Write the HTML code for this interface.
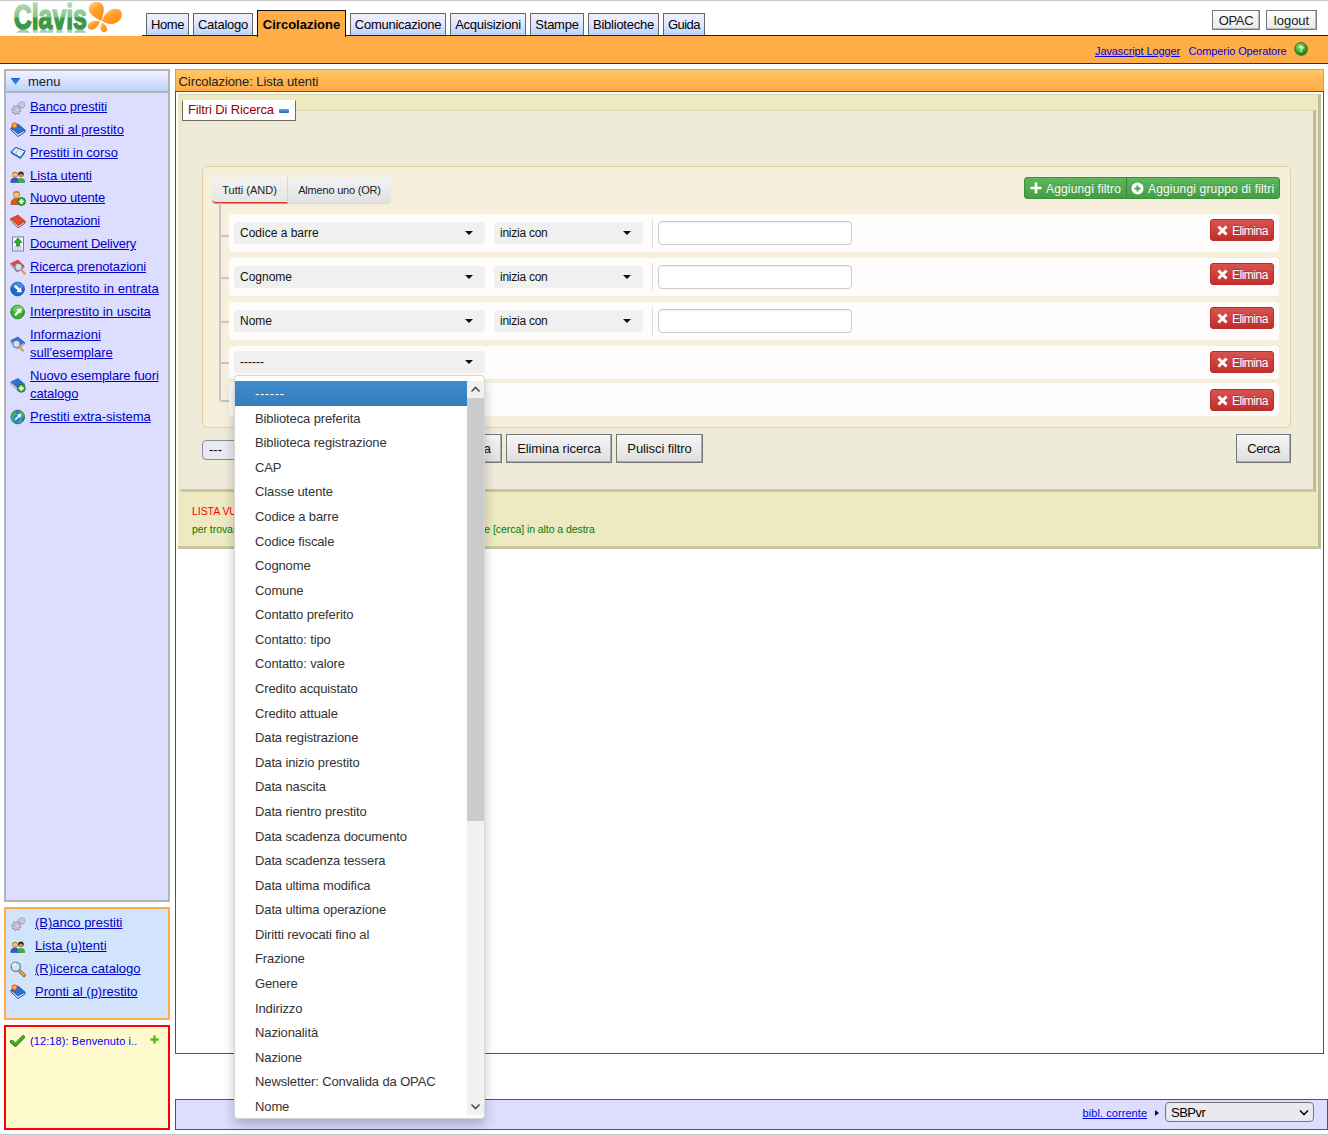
<!DOCTYPE html>
<html>
<head>
<meta charset="utf-8">
<title>Clavis</title>
<style>
*{box-sizing:border-box;margin:0;padding:0}
html,body{width:1328px;height:1135px;overflow:hidden;background:#fff}
body{position:relative;font-family:"Liberation Sans",sans-serif;font-size:13px;color:#000}
.abs{position:absolute}
a{color:#0000cc;text-decoration:underline}
/* top */
#topline{left:0;top:0;width:1328px;height:1px;background:#c8c8c8}
#tabline{left:142px;top:35px;width:1186px;height:1px;background:#222;z-index:1}
#obar{left:0;top:36px;width:1328px;height:28px;background:#ffad46;border-bottom:1px solid #333}
.tab{position:absolute;top:13px;height:22px;border:1px solid #666;border-bottom:none;background:linear-gradient(#eef0ff 0%,#e4e8ff 45%,#b8d2fb 100%);font-size:13px;line-height:21px;text-align:center;white-space:nowrap;letter-spacing:-0.25px}
.tab.act{letter-spacing:0;top:10px;height:27px;background:#ffad46;border-color:#111;font-weight:bold;line-height:27px;z-index:2}
.tbtn{position:absolute;top:10px;height:20px;border:1px solid #777;background:linear-gradient(#fdfdfd,#e9e9e9);box-shadow:inset -1px -1px 0 #bbb;font-size:13px;line-height:19px;text-align:center;color:#222}
/* left */
.lp{position:absolute;left:4px;width:166px}
#menu{top:69px;height:833px;border:2px solid #b4b4b4;background:#ddddff}
#menuh{left:0;top:0;width:162px;height:21px;background:linear-gradient(#eef1ff,#dfe6ff 40%,#b9d3fc);border-bottom:2px solid #b4b4b4;height:22px}
.mi{position:absolute;left:24px;margin-top:1px;font-size:13px;line-height:18px;white-space:nowrap}
.ic{position:absolute;left:4px;width:16px;height:16px;margin-top:1px}
#quick{top:907px;height:113px;border:2px solid #ffad46;background:#d2e4fb}
#msg{top:1025px;height:105px;border:2px solid #ff0000;background:#fffacd}
/* main */
#title{left:175px;top:69px;width:1149px;height:23px;border:1px solid #ff9900;background:linear-gradient(#ffc868,#ffb450 60%,#ffab42);font-size:13px;line-height:21px;padding-left:2.5px;padding-top:1px;letter-spacing:-0.07px;color:#222}
#content{left:175px;top:91px;width:1149px;height:963px;border:1px solid #555;background:#fff}
#panel{left:178px;top:94px;width:1143px;height:455px;background:#eee9c1;border-right:3px solid #c1bd99;border-bottom:3px solid #c9c5a0;border-top:1px solid #d9d5ae}
#fs{left:180px;top:110px;width:1136px;height:382px;background:#eeebd8;border-right:3px solid #c1bd99;border-bottom:3px solid #c9c5a2;border-top:1px solid #d8d4b0;border-left:1px solid #ebe7d0}
#legend{left:182px;top:100px;width:114px;height:21px;background:#fff;border:1px solid #6c6c58;border-top-color:#fff;font-size:13px;line-height:18px;color:#990000;padding-left:5px;letter-spacing:-0.13px}
#grp{left:202px;top:166px;width:1089px;height:262px;border:1px solid #e2d2a2;border-radius:5px;background:#f5efdc}
.row{position:absolute;left:229px;width:1050px;background:#fefdfc;border-radius:4px}
.sel{position:absolute;height:22px;background:#f0f0f0;border-radius:3px;font-size:12px;line-height:23px;padding-left:6px;color:#111}
.sel:after{content:"";position:absolute;right:12px;top:9px;border:4px solid transparent;border-top:4.5px solid #111;border-bottom:none}
.inp{position:absolute;left:658px;width:194px;height:24px;border:1px solid #ccc;border-radius:4px;background:#fff;box-shadow:inset 0 1px 1px rgba(0,0,0,.075)}
.vsep{position:absolute;left:652px;width:1px;height:28px;background:#ddd}
.del{position:absolute;left:1210px;width:64px;height:22px;border:1px solid #b92c28;border-radius:3px;background:linear-gradient(#d9534f,#c12e2a);color:#fff;font-size:12px;line-height:22px;text-shadow:0 -1px 0 rgba(0,0,0,.2);padding-left:21px;letter-spacing:-0.5px}
.tick{position:absolute;left:221px;width:8px;height:2px;background:#c4c4c4}
.btn{position:absolute;top:434px;height:29px;border:1px solid #777;background:linear-gradient(#f6f6f6,#dedede);box-shadow:inset -1px -1px 0 #aaa;font-size:13px;line-height:27px;text-align:center;letter-spacing:-0.1px;color:#111}
/* dropdown */
#dd{left:234px;top:375px;width:251px;height:744px;background:#fff;border:1px solid #d6d6d6;border-radius:4px;box-shadow:0 6px 12px rgba(0,0,0,.23);z-index:10;overflow:hidden}
#dd .it{position:absolute;left:0;width:232px;height:24.586px;line-height:26px;padding-left:20px;font-size:13px;color:#333;white-space:nowrap;letter-spacing:-0.12px}
#dd .it.on{background:linear-gradient(#428bca,#357ebd);color:#fff;letter-spacing:0.6px}
#sb{left:232px;top:5px;width:17px;height:734px;background:#f1f1f1}
#sbt{left:232px;top:22px;width:17px;height:423px;background:#cbcbcb}
#footer{left:175px;top:1099px;width:1153px;height:31px;border:1px solid #555;background:#ddddff}
</style>
</head>
<body>
<div class="abs" id="topline"></div>
<div class="abs" style="left:0;top:1134px;width:1328px;height:1px;background:#c4c4c4"></div>
<div class="abs" id="tabline"></div>
<div class="abs" id="obar"></div>

<!-- logo -->
<svg class="abs" style="left:0;top:0" width="130" height="35" viewBox="0 0 130 35">
<defs><linearGradient id="lg" gradientUnits="userSpaceOnUse" x1="0" y1="3.5" x2="0" y2="29.5"><stop offset="0" stop-color="#b4dab4"/><stop offset="0.5" stop-color="#84c48c"/><stop offset="0.56" stop-color="#3a9848"/><stop offset="1" stop-color="#3a9848"/></linearGradient>
<linearGradient id="og" x1="0.1" y1="0" x2="0.8" y2="1"><stop offset="0" stop-color="#ffd79c"/><stop offset="0.45" stop-color="#ffa02c"/><stop offset="1" stop-color="#ff8a10"/></linearGradient>
<clipPath id="rc"><rect x="0" y="29.6" width="90" height="3.2"/></clipPath></defs>
<g clip-path="url(#rc)" opacity="0.45"><text transform="translate(0 59) scale(0.69 -1)" x="20" y="29.4" font-family="Liberation Sans" font-weight="bold" font-size="36" fill="#3a9848" stroke="#3a9848" stroke-width="1.6">Clavis</text></g>
<text transform="scale(0.69 1)" x="20" y="29.4" font-family="Liberation Sans" font-weight="bold" font-size="36" fill="url(#lg)" stroke="url(#lg)" stroke-width="1.6">Clavis</text>
<g fill="url(#og)">
<path d="M101 21 C96 18 88 14 88.6 8 C89 3 94 1.4 98 2 C103 2.6 104.6 8 103.6 12 C103 16 102 19 101 21Z"/>
<path d="M102 21 C104 15 108 10 114 8.8 C119 8 122 11 121.8 15 C121.5 20 117 23.5 112 24 C108 24.3 104 22.5 102 21Z"/>
<path d="M100 21.5 C96 20 91 20.5 88.5 23.5 C86.5 26 88 29.5 91 29.8 C95 30 98.5 26 100 21.5Z"/>
<path d="M101.5 22.5 C104 23.5 107 26 107 29 C107 31.5 105 32.8 103 32.3 C100.5 31.5 99.5 27 101.5 22.5Z"/>
</g>
</svg>

<div class="tab" style="left:146px;width:43px;letter-spacing:-0.4px">Home</div>
<div class="tab" style="left:193px;width:60px">Catalogo</div>
<div class="tab act" style="left:257px;width:89px">Circolazione</div>
<div class="tab" style="left:350px;width:96px">Comunicazione</div>
<div class="tab" style="left:450px;width:76px">Acquisizioni</div>
<div class="tab" style="left:530px;width:54px">Stampe</div>
<div class="tab" style="left:588px;width:71px">Biblioteche</div>
<div class="tab" style="left:663px;width:42px;letter-spacing:-0.5px">Guida</div>
<div class="tbtn" style="left:1212px;width:48px;letter-spacing:-0.3px">OPAC</div>
<div class="tbtn" style="left:1266px;width:51px">logout</div>
<a class="abs" style="left:1095px;top:44px;font-size:11px;line-height:14px;color:#0000ee;letter-spacing:-0.1px">Javascript Logger</a>
<span class="abs" style="left:1188.5px;top:44px;font-size:11px;line-height:14px;color:#0000ee;letter-spacing:-0.12px;white-space:nowrap">Comperio Operatore</span>
<svg class="abs" style="left:1293px;top:41px" width="17" height="17" viewBox="0 0 17 17"><defs><radialGradient id="qg" cx="0.4" cy="0.3" r="0.75"><stop offset="0" stop-color="#9be07a"/><stop offset="0.6" stop-color="#3aa82a"/><stop offset="1" stop-color="#1f7a18"/></radialGradient></defs><ellipse cx="8.6" cy="8.8" rx="6.6" ry="6.4" fill="#7a5a20" opacity="0.45"/><circle cx="8" cy="7.8" r="6.2" fill="url(#qg)" stroke="#1d6a16" stroke-width="0.9"/><text x="8" y="11" font-size="8.5" font-weight="bold" text-anchor="middle" fill="#fff" font-family="Liberation Sans">?</text></svg>

<!-- left menu -->
<div class="lp" id="menu">
<div class="abs" id="menuh"><span class="abs" style="left:22px;top:2px;font-size:13px;line-height:18px;color:#222">menu</span>
<svg class="abs" style="left:4px;top:6px" width="11" height="9" viewBox="0 0 11 9"><defs><linearGradient id="ag" x1="0" y1="0" x2="0" y2="1"><stop offset="0" stop-color="#1a5fd0"/><stop offset="1" stop-color="#4a9af0"/></linearGradient></defs><path d="M0.6 1 L10.4 1 L5.5 8 Z" fill="url(#ag)"/></svg></div>
<a class="mi" style="top:26px;letter-spacing:-0.12px">Banco prestiti</a><svg class="ic" style="top:27px" viewBox="0 0 16 16"><g transform="translate(1.2 1.8) scale(0.9)"><path d="M9.50 10.20 L10.96 10.81 L10.60 12.19 L9.03 12.01 L8.42 12.82 L9.02 14.28 L7.79 15.00 L6.80 13.76 L5.80 13.90 L5.19 15.36 L3.81 15.00 L3.99 13.43 L3.18 12.82 L1.72 13.42 L1.00 12.19 L2.24 11.20 L2.10 10.20 L0.64 9.59 L1.00 8.21 L2.57 8.39 L3.18 7.58 L2.58 6.12 L3.81 5.40 L4.80 6.64 L5.80 6.50 L6.41 5.04 L7.79 5.40 L7.61 6.97 L8.42 7.58 L9.88 6.98 L10.60 8.21 L9.36 9.20Z" fill="#d0d0e0" stroke="#7c7c96" stroke-width="0.8" stroke-linejoin="round"/><circle cx="5.8" cy="10.2" r="1.5" fill="#f4f4fb" stroke="#8c8ca6" stroke-width="0.8"/><path d="M14.30 4.60 L15.47 5.06 L15.20 6.09 L13.96 5.92 L13.51 6.51 L14.01 7.66 L13.09 8.20 L12.33 7.20 L11.60 7.30 L11.14 8.47 L10.11 8.20 L10.28 6.96 L9.69 6.51 L8.54 7.01 L8.00 6.09 L9.00 5.33 L8.90 4.60 L7.73 4.14 L8.00 3.11 L9.24 3.28 L9.69 2.69 L9.19 1.54 L10.11 1.00 L10.87 2.00 L11.60 1.90 L12.06 0.73 L13.09 1.00 L12.92 2.24 L13.51 2.69 L14.66 2.19 L15.20 3.11 L14.20 3.87Z" fill="#d8d8e6" stroke="#8a8aa4" stroke-width="0.7" stroke-linejoin="round"/><circle cx="11.6" cy="4.6" r="1.1" fill="#f4f4fb" stroke="#9a9ab2" stroke-width="0.7"/></g></svg>
<a class="mi" style="top:49px">Pronti al prestito</a><svg class="ic" style="top:50px" viewBox="0 0 16 16"><path d="M1 6 L8 2 L15 8 L8 13 Z" fill="#1f5fc0"/><path d="M1 6 L8 11 L15 8 L15 10 L8 14.5 L1 8 Z" fill="#e8e8ee" stroke="#123a80" stroke-width="0.9"/><path d="M1 6 L8 2 L15 8 L8 12 Z" fill="#2a72d8" stroke="#174a9c" stroke-width="0.6"/><circle cx="4.5" cy="3.5" r="2.6" fill="#ffb020" stroke="#d04010" stroke-width="0.9"/></svg>
<a class="mi" style="top:72px;letter-spacing:-0.06px">Prestiti in corso</a><svg class="ic" style="top:73px" viewBox="0 0 16 16"><path d="M1 7 L6 2.5 L15 6 L10.5 12.5 Z" fill="#fafcff" stroke="#2a68c8" stroke-width="1.2"/><path d="M1 7 L10.5 12.5 L15 6 L15 8 L10.5 14 L1 8.5 Z" fill="#2a68c8"/><path d="M8 4 L5.5 10" stroke="#7aa2dc" stroke-width="1"/><path d="M4 6.5 L6.5 7.6 M9 6 L12 7.2 M8.5 8 L11 9" stroke="#9ab" stroke-width="0.7"/></svg>
<a class="mi" style="top:95px;letter-spacing:-0.08px">Lista utenti</a><svg class="ic" style="top:96px" viewBox="0 0 16 16"><g transform="translate(0.5 2.2) scale(0.9 0.82)"><circle cx="5" cy="5.4" r="3" fill="#f4c088" stroke="#b07030" stroke-width="0.7"/><path d="M1.8 5 A3.3 3.3 0 0 1 8.2 4.2 L5 3.4 Z" fill="#d08a20"/><path d="M0.3 15 C0.3 10.5 2.5 9.3 5 9.3 C7.5 9.3 9.2 10.5 9.2 15 Z" fill="#2a60c0" stroke="#1a408c" stroke-width="0.6"/><circle cx="11.6" cy="4.8" r="3.1" fill="#2c2418"/><circle cx="11.6" cy="6.2" r="2.2" fill="#c89058"/><path d="M7.6 15 C7.6 11 9 10 11.6 10 C14.2 10 15.8 11 15.8 15 Z" fill="#3cb040" stroke="#208028" stroke-width="0.6"/></g></svg>
<a class="mi" style="top:117px;letter-spacing:-0.19px">Nuovo utente</a><svg class="ic" style="top:118px" viewBox="0 0 16 16"><circle cx="6.5" cy="4.5" r="3.3" fill="#f2c088" stroke="#b07838" stroke-width="0.7"/><path d="M3.3 3.6 A3.4 3.4 0 0 1 9.8 3.6 L6.5 2.8 Z" fill="#c88828"/><path d="M1 14.5 C1 9.5 3.5 8.5 6.5 8.5 C9.5 8.5 12 9.5 12 14.5 Z" fill="#d85820" stroke="#a03810" stroke-width="0.6"/><circle cx="11.5" cy="11.5" r="4" fill="#38a830" stroke="#1c6c18" stroke-width="0.7"/><path d="M11.5 9 V14 M9 11.5 H14" stroke="#fff" stroke-width="1.7"/></svg>
<a class="mi" style="top:140px;letter-spacing:-0.19px">Prenotazioni</a><svg class="ic" style="top:141px" viewBox="0 0 16 16"><path d="M1 5.5 L8 2 L15 8 L8 12.5 Z" fill="#e84828" stroke="#a82810" stroke-width="0.6"/><path d="M1 5.5 L8 12.5 L15 8 L15 10 L8 14.8 L1 7.5 Z" fill="#e8e8ee" stroke="#8a2008" stroke-width="0.9"/><path d="M2 7 L8 13.2 L14.5 9" stroke="#b0b0b0" stroke-width="0.6" fill="none"/></svg>
<a class="mi" style="top:163px;letter-spacing:-0.22px">Document Delivery</a><svg class="ic" style="top:164px" viewBox="0 0 16 16"><rect x="2.5" y="1" width="11" height="14" fill="#fdfdff" stroke="#6a84a8" stroke-width="1"/><rect x="4" y="10" width="8" height="4" fill="#cfd8e8"/><path d="M8 2 L12 6.5 L9.6 6.5 L9.6 10 L6.4 10 L6.4 6.5 L4 6.5 Z" fill="#30b030" stroke="#187818" stroke-width="0.7"/></svg>
<a class="mi" style="top:186px;letter-spacing:-0.12px">Ricerca prenotazioni</a><svg class="ic" style="top:187px" viewBox="0 0 16 16"><path d="M1 4.5 L8 1 L14 7 L7 11 Z" fill="#e84828" stroke="#a82810" stroke-width="0.6"/><path d="M1 4.5 L7 11 L14 7 L14 8.5 L7 13 L1 6.5 Z" fill="#f0f0f0" stroke="#a82810" stroke-width="0.6"/><circle cx="8.5" cy="8" r="3.6" fill="#d8ecfc" fill-opacity="0.9" stroke="#6088b8" stroke-width="1.3"/><path d="M11.2 10.8 L14.8 14.6" stroke="#e89838" stroke-width="2.2" stroke-linecap="round"/></svg>
<a class="mi" style="top:208px;letter-spacing:0.1px">Interprestito in entrata</a><svg class="ic" style="top:209px" viewBox="0 0 16 16"><circle cx="7.6" cy="8" r="6.8" fill="#1c68d0" stroke="#0c3c90" stroke-width="0.8"/><ellipse cx="8" cy="5" rx="5.6" ry="3.6" fill="#5c9cf0" fill-opacity="0.65"/><path d="M4.2 5.6 L5.8 4 L9.6 7.8 L11 6.4 L11.6 11.6 L6.4 11 L7.8 9.6 Z" fill="#fff"/></svg>
<a class="mi" style="top:231px;letter-spacing:0.04px">Interprestito in uscita</a><svg class="ic" style="top:232px" viewBox="0 0 16 16"><circle cx="7.6" cy="8" r="6.8" fill="#38b028" stroke="#1c7018" stroke-width="0.8"/><ellipse cx="8" cy="5" rx="5.6" ry="3.6" fill="#84dc6c" fill-opacity="0.65"/><path d="M4.2 10.4 L5.8 12 L9.6 8.2 L11 9.6 L11.6 4.4 L6.4 5 L7.8 6.4 Z" fill="#fff"/></svg>
<a class="mi" style="top:254px">Informazioni<br>sull'esemplare</a><svg class="ic" style="top:264px" viewBox="0 0 16 16"><path d="M1 4.5 L8 1 L14.5 6.5 L7.5 10.5 Z" fill="#2a72d8" stroke="#174a9c" stroke-width="0.6"/><path d="M1 4.5 L7.5 10.5 L14.5 6.5 L14.5 8 L7.5 12.5 L1 6.5 Z" fill="#f0f0f0" stroke="#174a9c" stroke-width="0.6"/><circle cx="6.5" cy="8" r="3.6" fill="#d8ecfc" fill-opacity="0.92" stroke="#6088b8" stroke-width="1.3"/><path d="M9.2 10.8 L12.8 14.6" stroke="#e89838" stroke-width="2.2" stroke-linecap="round"/></svg>
<a class="mi" style="top:295px;letter-spacing:-0.1px">Nuovo esemplare fuori<br>catalogo</a><svg class="ic" style="top:305px" viewBox="0 0 16 16"><path d="M1 5 L8 1.5 L14.5 7 L7.5 11 Z" fill="#2a72d8" stroke="#174a9c" stroke-width="0.6"/><path d="M1 5 L7.5 11 L14.5 7 L14.5 8.8 L7.5 13.2 L1 7 Z" fill="#f0f0f0" stroke="#174a9c" stroke-width="0.6"/><circle cx="11.3" cy="11.3" r="4" fill="#38a830" stroke="#1c6c18" stroke-width="0.7"/><path d="M11.3 8.8 V13.8 M8.8 11.3 H13.8" stroke="#fff" stroke-width="1.7"/></svg>
<a class="mi" style="top:336px;letter-spacing:-0.03px">Prestiti extra-sistema</a><svg class="ic" style="top:337px" viewBox="0 0 16 16"><circle cx="7.8" cy="8" r="6.8" fill="#2c80d8" stroke="#184c98" stroke-width="0.8"/><path d="M3 4 C5 2 7 3 6.5 5 C6 7 4 6.5 3.5 9 C3 11 5 12 4.5 13.5 C2 12 0.8 9 1.4 6.5 Z M10 1.6 C13 2.5 15 5.5 14.8 8 C13.5 8.5 12.5 7 11 7.5 C9.5 8 10.5 5 9.5 4 Z M9 11 C10.5 10 12.5 11 12.5 12.5 C11.5 14 10 14.8 8.5 14.8 Z" fill="#48b838"/><path d="M4.6 10 L5.9 11.3 L9.3 7.9 L10.6 9.2 L11.2 4.8 L6.8 5.4 L8.1 6.7 Z" fill="#fff"/></svg>
</div>

<div class="lp" id="quick"><a class="mi" style="left:29px;top:4px">(B)anco prestiti</a><svg class="ic" style="left:4px;top:5px" viewBox="0 0 16 16"><g transform="translate(1.2 1.8) scale(0.9)"><path d="M9.50 10.20 L10.96 10.81 L10.60 12.19 L9.03 12.01 L8.42 12.82 L9.02 14.28 L7.79 15.00 L6.80 13.76 L5.80 13.90 L5.19 15.36 L3.81 15.00 L3.99 13.43 L3.18 12.82 L1.72 13.42 L1.00 12.19 L2.24 11.20 L2.10 10.20 L0.64 9.59 L1.00 8.21 L2.57 8.39 L3.18 7.58 L2.58 6.12 L3.81 5.40 L4.80 6.64 L5.80 6.50 L6.41 5.04 L7.79 5.40 L7.61 6.97 L8.42 7.58 L9.88 6.98 L10.60 8.21 L9.36 9.20Z" fill="#d0d0e0" stroke="#7c7c96" stroke-width="0.8" stroke-linejoin="round"/><circle cx="5.8" cy="10.2" r="1.5" fill="#f4f4fb" stroke="#8c8ca6" stroke-width="0.8"/><path d="M14.30 4.60 L15.47 5.06 L15.20 6.09 L13.96 5.92 L13.51 6.51 L14.01 7.66 L13.09 8.20 L12.33 7.20 L11.60 7.30 L11.14 8.47 L10.11 8.20 L10.28 6.96 L9.69 6.51 L8.54 7.01 L8.00 6.09 L9.00 5.33 L8.90 4.60 L7.73 4.14 L8.00 3.11 L9.24 3.28 L9.69 2.69 L9.19 1.54 L10.11 1.00 L10.87 2.00 L11.60 1.90 L12.06 0.73 L13.09 1.00 L12.92 2.24 L13.51 2.69 L14.66 2.19 L15.20 3.11 L14.20 3.87Z" fill="#d8d8e6" stroke="#8a8aa4" stroke-width="0.7" stroke-linejoin="round"/><circle cx="11.6" cy="4.6" r="1.1" fill="#f4f4fb" stroke="#9a9ab2" stroke-width="0.7"/></g></svg>
<a class="mi" style="left:29px;top:27px">Lista (u)tenti</a><svg class="ic" style="left:4px;top:28px" viewBox="0 0 16 16"><g transform="translate(0.5 2.2) scale(0.9 0.82)"><circle cx="5" cy="5.4" r="3" fill="#f4c088" stroke="#b07030" stroke-width="0.7"/><path d="M1.8 5 A3.3 3.3 0 0 1 8.2 4.2 L5 3.4 Z" fill="#d08a20"/><path d="M0.3 15 C0.3 10.5 2.5 9.3 5 9.3 C7.5 9.3 9.2 10.5 9.2 15 Z" fill="#2a60c0" stroke="#1a408c" stroke-width="0.6"/><circle cx="11.6" cy="4.8" r="3.1" fill="#2c2418"/><circle cx="11.6" cy="6.2" r="2.2" fill="#c89058"/><path d="M7.6 15 C7.6 11 9 10 11.6 10 C14.2 10 15.8 11 15.8 15 Z" fill="#3cb040" stroke="#208028" stroke-width="0.6"/></g></svg>
<a class="mi" style="left:29px;top:50px">(R)icerca catalogo</a><svg class="ic" style="left:4px;top:51px" viewBox="0 0 16 16"><path d="M9.4 9.6 L14 14.2" stroke="#7a5a30" stroke-width="3.4" stroke-linecap="round"/><path d="M9.4 9.6 L13.8 14" stroke="#f0a848" stroke-width="2" stroke-linecap="round"/><circle cx="5.8" cy="5.8" r="4.6" fill="#cfe6fa" stroke="#7c8ea4" stroke-width="1.5"/><path d="M2.6 5 A3.4 3.4 0 0 1 6 2.4" stroke="#fff" stroke-width="1.2" fill="none"/></svg>
<a class="mi" style="left:29px;top:73px">Pronti al (p)restito</a><svg class="ic" style="left:4px;top:74px" viewBox="0 0 16 16"><path d="M1 6 L8 2 L15 8 L8 13 Z" fill="#1f5fc0"/><path d="M1 6 L8 11 L15 8 L15 10 L8 14.5 L1 8 Z" fill="#e8e8ee" stroke="#123a80" stroke-width="0.9"/><path d="M1 6 L8 2 L15 8 L8 12 Z" fill="#2a72d8" stroke="#174a9c" stroke-width="0.6"/><circle cx="4.5" cy="3.5" r="2.6" fill="#ffb020" stroke="#d04010" stroke-width="0.9"/></svg>
</div>
<div class="lp" id="msg"><svg class="abs" style="left:4px;top:8px" width="15" height="12" viewBox="0 0 15 12"><path d="M1.8 6.6 L5.4 10 L13.2 2" fill="none" stroke="#2a7a1a" stroke-width="3.6" stroke-linecap="round" stroke-linejoin="round"/><path d="M1.8 6.3 L5.4 9.5 L13.2 1.8" fill="none" stroke="#48b428" stroke-width="2" stroke-linecap="round" stroke-linejoin="round"/></svg><span class="abs" style="left:24px;top:7px;font-size:11px;line-height:14px;color:#0000ff;white-space:nowrap;letter-spacing:0.1px">(12:18): Benvenuto i..</span><svg class="abs" style="left:144px;top:8px" width="9" height="9" viewBox="0 0 9 9"><path d="M4.5 1.4 V7.6 M1.4 4.5 H7.6" stroke="#8ccc4c" stroke-width="3" stroke-linecap="round"/><path d="M4.5 2 V7 M2 4.5 H7" stroke="#58b028" stroke-width="1.3" stroke-linecap="round"/></svg></div>

<!-- main -->
<div class="abs" id="title">Circolazione: Lista utenti</div>
<div class="abs" id="content"></div>
<div class="abs" id="panel"></div>
<div class="abs" id="fs"></div>
<div class="abs" id="legend">Filtri Di Ricerca<span class="abs" style="left:96px;top:8px;width:10px;height:4px;border-radius:1px;background:linear-gradient(#6aa8ee,#1f62c4)"></span></div>
<div class="abs" id="grp"></div>
<div class="abs" style="left:212px;top:177px;width:179px;height:26px;border-radius:4px;background:linear-gradient(#f3f3f3,#e1e1e4);box-shadow:0 1px 1px rgba(0,0,0,.10)"></div><div class="abs" style="left:212px;top:177px;width:76px;height:26px;border-radius:4px 0 0 4px;background:linear-gradient(#f2f2f2,#e6e6e6);border-bottom:1px solid #d9332b;box-shadow:0 1px 0 rgba(217,51,43,.4);border-right:1px solid #d4d4d4;font-size:11px;line-height:26px;text-align:center;color:#222">Tutti (AND)</div><div class="abs" style="left:288px;top:177px;width:103px;height:26px;font-size:11px;line-height:27px;text-align:center;color:#222;letter-spacing:-0.2px">Almeno uno (OR)</div>
<div class="abs" style="left:219px;top:203px;width:2px;height:198px;background:#c6c6c6"></div>
<div class="abs" style="left:1024px;top:177px;width:256px;height:22px;border:1px solid #3e8f3e;border-radius:3px;background:linear-gradient(#5cb85c,#449d44);color:#fff;font-size:12px;line-height:20px;text-shadow:0 -1px 0 rgba(0,0,0,.2);white-space:nowrap"><svg class="abs" style="left:5px;top:4px" width="12" height="12" viewBox="0 0 12 12"><path d="M6 0.5 V11.5 M0.5 6 H11.5" stroke="#fff" stroke-width="2.6"/></svg><span class="abs" style="left:21px;top:1px;letter-spacing:0.16px">Aggiungi filtro</span><span class="abs" style="left:101px;top:-1px;width:1px;height:22px;background:#3a873a"></span><svg class="abs" style="left:106px;top:4px" width="13" height="13" viewBox="0 0 13 13"><circle cx="6.5" cy="6.5" r="6" fill="#fff"/><path d="M6.5 3.4 V9.6 M3.4 6.5 H9.6" stroke="#4aa54a" stroke-width="2"/></svg><span class="abs" style="left:123px;top:1px;letter-spacing:0.17px">Aggiungi gruppo di filtri</span></div>
<div class="row" style="top:214px;height:38px"></div><div class="tick" style="top:235px"></div><div class="sel" style="left:234px;top:222px;width:251px">Codice a barre</div><div class="sel" style="left:494px;top:222px;width:149px;letter-spacing:-0.25px">inizia con</div><div class="vsep" style="top:219px"></div><div class="inp" style="top:221px"></div><div class="del" style="top:219px"><svg class="abs" style="left:5.5px;top:5px" width="11" height="11" viewBox="0 0 10 10"><path d="M1.3 1.3 L8.7 8.7 M8.7 1.3 L1.3 8.7" stroke="#fff" stroke-width="2.7"/></svg>Elimina</div>
<div class="row" style="top:258px;height:38px"></div><div class="tick" style="top:277px"></div><div class="sel" style="left:234px;top:266px;width:251px">Cognome</div><div class="sel" style="left:494px;top:266px;width:149px;letter-spacing:-0.25px">inizia con</div><div class="vsep" style="top:263px"></div><div class="inp" style="top:265px"></div><div class="del" style="top:263px"><svg class="abs" style="left:5.5px;top:5px" width="11" height="11" viewBox="0 0 10 10"><path d="M1.3 1.3 L8.7 8.7 M8.7 1.3 L1.3 8.7" stroke="#fff" stroke-width="2.7"/></svg>Elimina</div>
<div class="row" style="top:302px;height:38px"></div><div class="tick" style="top:321px"></div><div class="sel" style="left:234px;top:310px;width:251px">Nome</div><div class="sel" style="left:494px;top:310px;width:149px;letter-spacing:-0.25px">inizia con</div><div class="vsep" style="top:307px"></div><div class="inp" style="top:309px"></div><div class="del" style="top:307px"><svg class="abs" style="left:5.5px;top:5px" width="11" height="11" viewBox="0 0 10 10"><path d="M1.3 1.3 L8.7 8.7 M8.7 1.3 L1.3 8.7" stroke="#fff" stroke-width="2.7"/></svg>Elimina</div>
<div class="row" style="top:346px;height:33px"></div><div class="tick" style="top:362px"></div><div class="sel" style="left:234px;top:351px;width:251px">------</div><div class="del" style="top:351px"><svg class="abs" style="left:5.5px;top:5px" width="11" height="11" viewBox="0 0 10 10"><path d="M1.3 1.3 L8.7 8.7 M8.7 1.3 L1.3 8.7" stroke="#fff" stroke-width="2.7"/></svg>Elimina</div>
<div class="row" style="top:383px;height:33px"></div><div class="tick" style="top:400px"></div><div class="del" style="top:389px"><svg class="abs" style="left:5.5px;top:5px" width="11" height="11" viewBox="0 0 10 10"><path d="M1.3 1.3 L8.7 8.7 M8.7 1.3 L1.3 8.7" stroke="#fff" stroke-width="2.7"/></svg>Elimina</div>
<div class="abs" style="left:202px;top:440px;width:60px;height:20px;border:1px solid #8c8c98;border-radius:4px;background:#e9e9f1;font-size:13px;line-height:18px;padding-left:6px">---</div><div class="btn" style="left:440px;width:62px;text-align:right;padding-right:10px">a</div><div class="btn" style="left:506px;width:106px">Elimina ricerca</div><div class="btn" style="left:616px;width:87px">Pulisci filtro</div><div class="btn" style="left:1236px;width:55px;letter-spacing:-0.4px">Cerca</div>
<span class="abs" style="left:192px;top:504.6px;font-size:10.5px;line-height:13px;color:#ff0000;white-space:nowrap;letter-spacing:-0.06px">LISTA VUOTA</span><span class="abs" style="left:192px;top:522.6px;font-size:10.5px;line-height:13px;color:#008000;white-space:nowrap;letter-spacing:-0.06px">per trovare utenti impostare i filtri desiderati e premere il pulsante [cerca] in alto a destra</span>

<div class="abs" id="footer"><a class="abs" style="left:906.5px;top:6px;font-size:11px;line-height:14px;color:#0000ee;letter-spacing:0.07px;white-space:nowrap">bibl. corrente</a><span class="abs" style="left:979px;top:10px;border:3.5px solid transparent;border-left:4.5px solid #111;border-right:none"></span><div class="abs" style="left:989px;top:2px;width:149px;height:20px;border:1px solid #777;border-radius:4px;background:#e9e9f0;font-size:13px;line-height:19px;padding-left:5px;letter-spacing:-0.5px">SBPvr<svg class="abs" style="left:132px;top:5px" width="12" height="9" viewBox="0 0 12 9"><path d="M2 2.5 L6 6.5 L10 2.5" fill="none" stroke="#111" stroke-width="1.6"/></svg></div></div>
<div class="abs" id="dd"><div class="it on" style="top:5.000px">------</div><div class="it" style="top:29.586px">Biblioteca preferita</div><div class="it" style="top:54.172px">Biblioteca registrazione</div><div class="it" style="top:78.758px">CAP</div><div class="it" style="top:103.344px">Classe utente</div><div class="it" style="top:127.930px">Codice a barre</div><div class="it" style="top:152.516px">Codice fiscale</div><div class="it" style="top:177.102px">Cognome</div><div class="it" style="top:201.688px">Comune</div><div class="it" style="top:226.274px">Contatto preferito</div><div class="it" style="top:250.860px">Contatto: tipo</div><div class="it" style="top:275.446px">Contatto: valore</div><div class="it" style="top:300.032px">Credito acquistato</div><div class="it" style="top:324.618px">Credito attuale</div><div class="it" style="top:349.204px">Data registrazione</div><div class="it" style="top:373.790px">Data inizio prestito</div><div class="it" style="top:398.376px">Data nascita</div><div class="it" style="top:422.962px">Data rientro prestito</div><div class="it" style="top:447.548px">Data scadenza documento</div><div class="it" style="top:472.134px">Data scadenza tessera</div><div class="it" style="top:496.720px">Data ultima modifica</div><div class="it" style="top:521.306px">Data ultima operazione</div><div class="it" style="top:545.892px">Diritti revocati fino al</div><div class="it" style="top:570.478px">Frazione</div><div class="it" style="top:595.064px">Genere</div><div class="it" style="top:619.650px">Indirizzo</div><div class="it" style="top:644.236px">Nazionalità</div><div class="it" style="top:668.822px">Nazione</div><div class="it" style="top:693.408px">Newsletter: Convalida da OPAC</div><div class="it" style="top:717.994px">Nome</div>
<div class="abs" id="sb"></div><div class="abs" id="sbt"></div><svg class="abs" style="left:232px;top:5px" width="17" height="17" viewBox="0 0 17 17"><path d="M4.5 10.5 L8.5 6.5 L12.5 10.5" fill="none" stroke="#505050" stroke-width="1.6"/></svg><svg class="abs" style="left:232px;top:722px" width="17" height="17" viewBox="0 0 17 17"><path d="M4.5 6.5 L8.5 10.5 L12.5 6.5" fill="none" stroke="#505050" stroke-width="1.6"/></svg></div>
</body>
</html>
